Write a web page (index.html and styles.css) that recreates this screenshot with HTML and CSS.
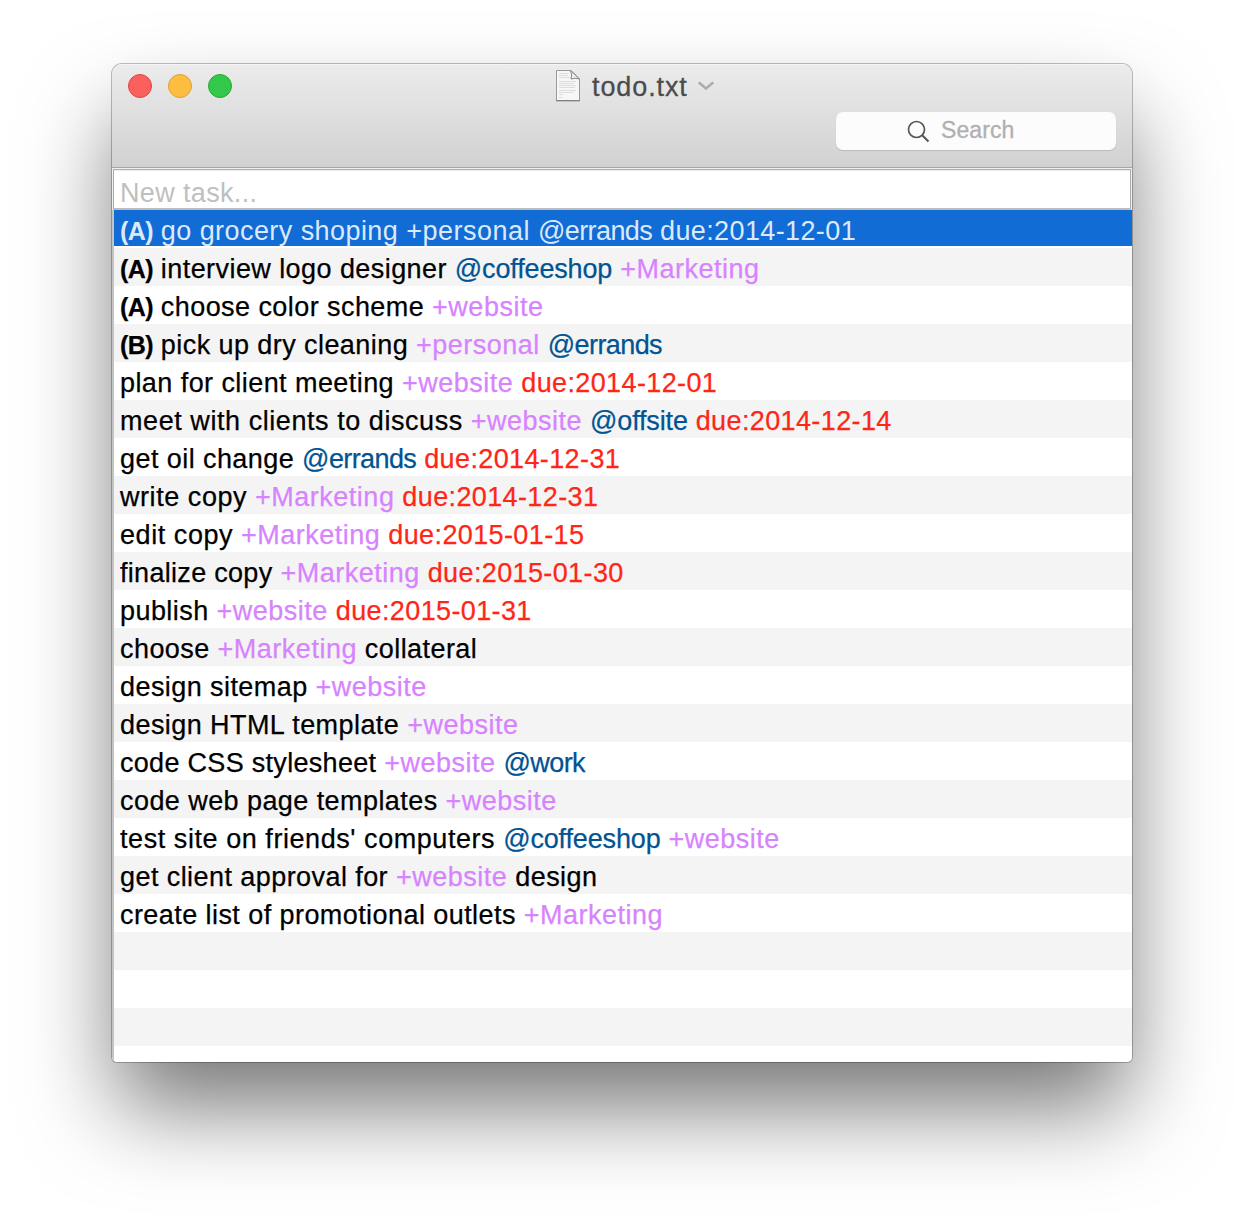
FILE: index.html
```html
<!DOCTYPE html>
<html lang="en">
<head>
<meta charset="utf-8">
<title>todo.txt</title>
<link rel="stylesheet" href="styles.css">
</head>
<body>
<main class="window">
  <header class="toolbar">
    <div class="titlebar">
      <div class="lights"><i class="light red"></i><i class="light yellow"></i><i class="light green"></i></div>
      <div class="title">
        <svg class="doc" width="26" height="33" viewBox="0 0 26 33">
          <path d="M1.500 1.500H16L24.500 10V31.500H1.500Z" fill="#f7f7f7" stroke="#999"/>
          <path d="M1 31.800H25" stroke="#777" stroke-width="1"/>
          <path d="M4 4.500H14M4 6.500H13M4 8.500H15M4 12.500H21M4 14.500H19M4 16.500H21M4 18.500H20M4 21.500H21M4 23.500H19M4 25.500H8M4 28.500H7" stroke="#d6d6d6" stroke-width=".8"/>
          <path d="M15.500 1.500Q17.500 6 16 10Q20 8.500 24.500 10Z" fill="#eee" stroke="#888"/>
        </svg>
        <span>todo.txt</span>
        <svg class="chevron" width="16" height="10" viewBox="0 0 16 10"><path d="M1.500 2L8 7.500L14.500 2" fill="none" stroke="#acacac" stroke-width="2.500" stroke-linecap="round"/></svg>
      </div>
    </div>
    <div class="search">
      <svg width="24" height="24" viewBox="0 0 24 24"><circle cx="9.500" cy="9.500" r="8" fill="none" stroke="#555" stroke-width="1.700"/><path d="M15.200 15.200L21.500 21.500" stroke="#555" stroke-width="2"/></svg>
      <span>Search</span>
    </div>
  </header>
  <div class="new-task"><span>New task...</span></div>
  <div class="list">
    <div class="row selected"><b>(A)</b> <span class="text">go grocery shoping</span> <span class="project">+personal</span> <span class="context tight">@errands</span> <span class="due">due:2014-12-01</span></div>
    <div class="row"><b>(A)</b> <span class="text">interview logo designer</span> <span class="context">@coffeeshop</span> <span class="project">+Marketing</span></div>
    <div class="row"><b>(A)</b> <span class="text">choose color scheme</span> <span class="project">+website</span></div>
    <div class="row"><b>(B)</b> <span class="text">pick up dry cleaning</span> <span class="project">+personal</span> <span class="context tight">@errands</span></div>
    <div class="row"><span class="text">plan for client meeting</span> <span class="project">+website</span> <span class="due">due:2014-12-01</span></div>
    <div class="row"><span class="text loose">meet with clients to discuss</span> <span class="project">+website</span> <span class="context">@offsite</span> <span class="due">due:2014-12-14</span></div>
    <div class="row"><span class="text">get oil change</span> <span class="context tight">@errands</span> <span class="due">due:2014-12-31</span></div>
    <div class="row"><span class="text loose">write copy</span> <span class="project">+Marketing</span> <span class="due">due:2014-12-31</span></div>
    <div class="row"><span class="text loose">edit copy</span> <span class="project">+Marketing</span> <span class="due">due:2015-01-15</span></div>
    <div class="row"><span class="text snug">finalize copy</span> <span class="project">+Marketing</span> <span class="due">due:2015-01-30</span></div>
    <div class="row"><span class="text">publish</span> <span class="project">+website</span> <span class="due">due:2015-01-31</span></div>
    <div class="row"><span class="text">choose</span> <span class="project">+Marketing</span> <span class="text">collateral</span></div>
    <div class="row"><span class="text">design sitemap</span> <span class="project">+website</span></div>
    <div class="row"><span class="text">design HTML template</span> <span class="project">+website</span></div>
    <div class="row"><span class="text snug">code CSS stylesheet</span> <span class="project">+website</span> <span class="context tight">@work</span></div>
    <div class="row"><span class="text">code web page templates</span> <span class="project">+website</span></div>
    <div class="row"><span class="text loose">test site on friends' computers</span> <span class="context">@coffeeshop</span> <span class="project">+website</span></div>
    <div class="row"><span class="text">get client approval for</span> <span class="project">+website</span> <span class="text">design</span></div>
    <div class="row"><span class="text">create list of promotional outlets</span> <span class="project">+Marketing</span></div>
    <div class="row"></div>
    <div class="row"></div>
    <div class="row"></div>
    <div class="row"></div>
  </div>
</main>
</body>
</html>
```
FILE: styles.css
```css
* { box-sizing: border-box; }
body {
  margin: 0;
  height: 1222px;
  padding: 64px 112px 0;
  background: #fff;
  font-family: "Liberation Sans", Arial, sans-serif;
  overflow: hidden;
}
.window {
  width: 1020px;
  height: 998px;
  display: flex;
  flex-direction: column;
  border-radius: 10px 10px 5px 5px;
  overflow: hidden;
  background: #f0f0f0;
  box-shadow: 0 0 0 1px rgba(0, 0, 0, .25), 0 50px 90px -5px rgba(0, 0, 0, .54);
}
.toolbar {
  height: 104px;
  flex: none;
  background: linear-gradient(#ececec, #d1d1d1);
  border-bottom: 1px solid #a6a6a6;
  box-shadow: inset 0 1px #f5f5f5;
}
.titlebar {
  height: 48px;
  display: grid;
  grid-template-columns: 443px 1fr;
}
.lights { display: flex; gap: 16px; padding: 10px 0 0 16px; }
.light { width: 24px; height: 24px; border-radius: 50%; border: 1px solid; }
.red { background: #fc605c; border-color: #df4744; }
.yellow { background: #fdbd41; border-color: #de9f34; }
.green { background: #34c84a; border-color: #27a935; }
.title {
  display: flex;
  align-items: flex-start;
  padding-top: 5px;
  color: #4c4c4c;
  font-size: 27px;
  line-height: 37px;
  letter-spacing: .9px;
  -webkit-text-stroke: .3px;
}
.title span { margin-left: 11px; width: 106px; white-space: nowrap; }
.chevron { margin-top: 12px; }
.search {
  width: 280px;
  height: 38px;
  margin-left: 724px;
  border-radius: 7px;
  background: #fcfcfc;
  box-shadow: 0 1px 1px #bbb;
  display: flex;
  padding: 8px 0 0 71px;
  gap: 10px;
  font-size: 23px;
  line-height: 20px;
  letter-spacing: .1px;
  color: #b0b0b0;
}
.search span { -webkit-text-stroke: .3px; }
.new-task {
  height: 41px;
  flex: none;
  margin: 1px 1px 0;
  background: #fff;
  border: 1px solid #adadad;
  border-bottom: 2px solid #bdbdbd;
  box-shadow: inset 0 1px #eee;
  padding-left: 6px;
  font-size: 27px;
  line-height: 46px;
  letter-spacing: .35px;
  color: #bfbfbf;
}
.list {
  flex: 1;
  overflow: hidden;
  background: #fff;
  border-left: 2px solid #c4c4c4;
}
.row {
  height: 38px;
  padding-left: 6px;
  font-size: 27px;
  line-height: 42px;
  letter-spacing: .43px;
  white-space: pre;
  color: #000;
  -webkit-text-stroke: .25px;
}
.row:nth-child(even) { background: #f4f4f4; }
.row b { font-size: 25px; letter-spacing: -.6px; }
.project { color: #d783ff; letter-spacing: .5px; }
.context { color: #005493; letter-spacing: -.15px; }
.due { color: #ff2617; letter-spacing: .38px; }
.loose { letter-spacing: .56px; }
.snug { letter-spacing: .3px; }
.tight { letter-spacing: -.6px; }
.row.selected { background: #116cd6; border-bottom: 2px solid #fff; color: #dce9f9; -webkit-text-stroke: 0; }
.selected span { color: inherit; }
```
